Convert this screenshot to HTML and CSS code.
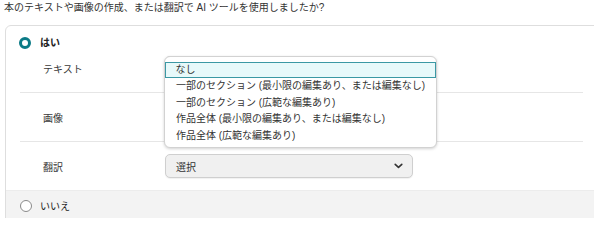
FILE: index.html
```html
<!DOCTYPE html>
<html lang="ja">
<head>
<meta charset="utf-8">
<link rel="stylesheet" href="styles.css">
</head>
<body>
<p class="question">本のテキストや画像の作成、または翻訳で AI ツールを使用しましたか?</p>
<div class="card">
  <div class="opt opt-yes">
    <div class="opt-head">
      <span class="radio radio-on"></span>
      <span class="opt-label bold">はい</span>
    </div>
    <div class="rows">
      <div class="row">
        <span class="row-label">テキスト</span>
        <div class="select-wrap">
          <div class="select"></div>
        </div>
      </div>
      <div class="row">
        <span class="row-label">画像</span>
        <div class="select-wrap">
          <div class="select"></div>
        </div>
      </div>
      <div class="row">
        <span class="row-label">翻訳</span>
        <div class="select-wrap">
          <div class="select"><span>選択</span>
            <svg class="chev" width="9" height="6" viewBox="0 0 9 6"><path d="M1.2 1.3 L4.5 4.4 L7.8 1.3" fill="none" stroke="#333" stroke-width="1.6" stroke-linecap="round" stroke-linejoin="round"/></svg>
          </div>
        </div>
      </div>
    </div>
  </div>
  <div class="opt opt-no">
    <span class="radio radio-off"></span>
    <span class="opt-label">いいえ</span>
  </div>
</div>
<ul class="listbox">
  <li class="item active">なし</li>
  <li class="item">一部のセクション (最小限の編集あり、または編集なし)</li>
  <li class="item">一部のセクション (広範な編集あり)</li>
  <li class="item">作品全体 (最小限の編集あり、または編集なし)</li>
  <li class="item">作品全体 (広範な編集あり)</li>
</ul>
</body>
</html>
```

FILE: styles.css
```css
html, body {
  margin: 0;
  padding: 0;
  overflow: hidden;
  background: #fff;
}
body {
  width: 594px;
  height: 218px;
  position: relative;
  font-family: "Liberation Sans", "Noto Sans CJK JP", sans-serif;
  font-size: 10px;
  color: #333;
}
.question {
  margin: 0;
  padding: 1px 0 0 4px;
  line-height: 14px;
  height: 24px;
}
.card {
  margin-left: 5px;
  width: 600px;
  border: 1px solid #dedede;
  border-radius: 6px;
  overflow: hidden;
  box-sizing: border-box;
  height: 200px;
}
.opt-head {
  display: flex;
  align-items: center;
  padding: 10px 0 0 13px;
  height: 14px;
  line-height: 14px;
}
.radio {
  display: inline-block;
  box-sizing: border-box;
  border-radius: 50%;
  flex: none;
}
.radio-on {
  width: 12px;
  height: 12px;
  border: 3.6px solid #0b7a86;
  background: #fff;
}
.radio-off {
  width: 12px;
  height: 12px;
  border: 1px solid #8a8a8a;
  background: #fff;
}
.opt-label {
  margin-left: 9px;
  color: #222;
}
.bold {
  font-weight: bold;
}
.rows {
  margin: -6px 21px 0 14px;
}
.row {
  display: grid;
  grid-template-columns: 145px 248px;
  align-items: center;
  height: 48px;
  border-bottom: 1px solid #e6e6e6;
}
.row:last-child {
  border-bottom: none;
}
.row-label {
  padding-left: 23px;
  color: #3a3a3a;
}
.select {
  box-sizing: border-box;
  height: 24px;
  border: 1px solid #cfcfcf;
  border-radius: 5px;
  background: #f0f0f0;
  display: flex;
  align-items: center;
  justify-content: space-between;
  padding: 0 9px 0 10px;
  box-shadow: 0 1px 1px rgba(0,0,0,0.06);
}
.chev {
  display: block;
}
.opt-no {
  display: flex;
  align-items: center;
  background: #f3f3f3;
  border-top: 1px solid #ececec;
  height: 32px;
  padding-left: 14px;
  padding-bottom: 2px;
  box-sizing: border-box;
}
.opt-no .opt-label {
  margin-left: 8px;
}
.listbox {
  position: absolute;
  left: 164px;
  top: 56px;
  width: 273px;
  height: 92px;
  box-sizing: border-box;
  margin: 0;
  padding: 5px 0 0 0;
  list-style: none;
  background: #fff;
  border: 1px solid #d2d2d2;
  border-radius: 6px;
  box-shadow: 0 1px 3px rgba(0,0,0,0.18);
}
.item {
  height: 16.4px;
  line-height: 16.4px;
  padding-left: 11px;
  color: #333;
  white-space: nowrap;
  box-sizing: border-box;
}
.item.active {
  background: #e7f9fa;
  border: 1.5px solid #3b98a4;
  padding-left: 9.5px;
  line-height: 13.4px;
}
```
